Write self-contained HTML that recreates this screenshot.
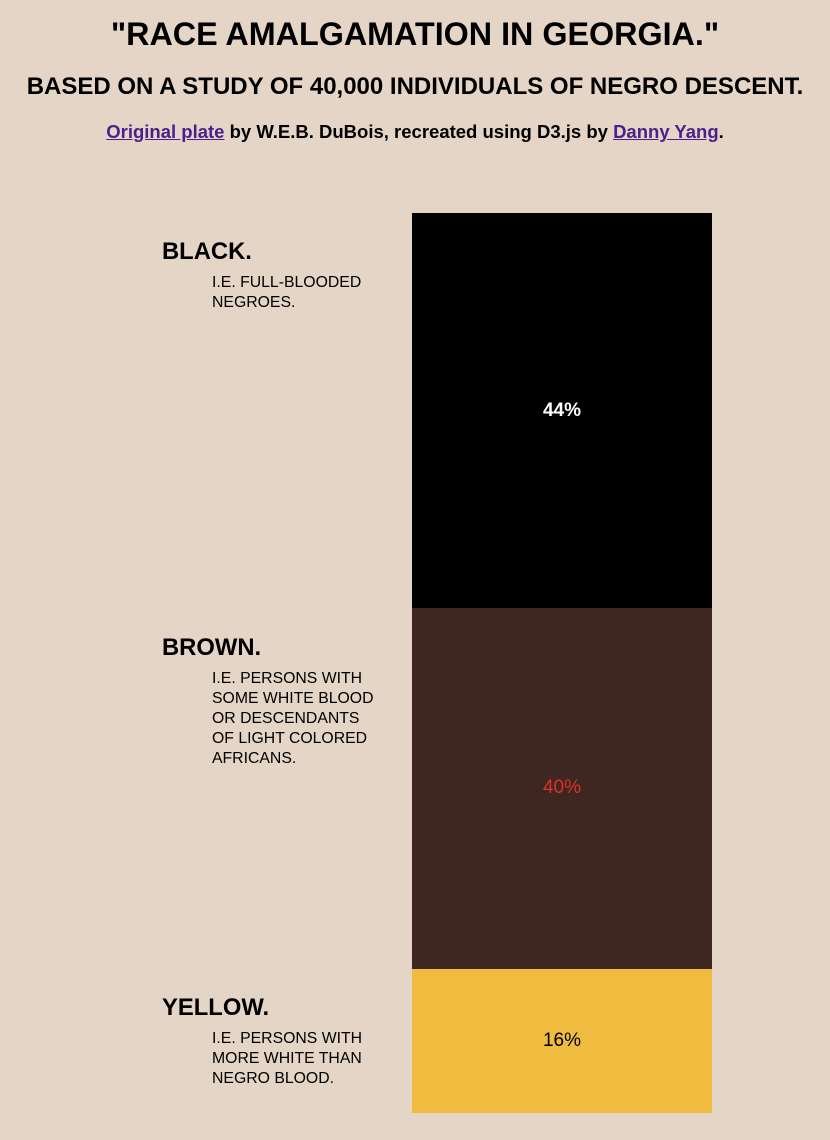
<!DOCTYPE html>
<html><head><meta charset="utf-8"><style>
html,body{margin:0;padding:0;background:#E4D5C6;width:830px;height:1140px;overflow:hidden;font-family:"Liberation Sans",Arial,sans-serif;}
.c{position:absolute;left:0;width:830px;text-align:center;font-weight:bold;color:#000;white-space:nowrap}
a{color:#4B1F8C;text-decoration:underline}
svg{position:absolute;left:0;top:0}
</style></head><body>
<div class="c" style="top:15px;font-size:32.3px;line-height:38px">"RACE AMALGAMATION IN GEORGIA."</div>
<div class="c" style="top:73px;font-size:24px;line-height:28px">BASED ON A STUDY OF 40,000 INDIVIDUALS OF NEGRO DESCENT.</div>
<div class="c" style="top:121px;font-size:18.5px;line-height:22px"><a>Original plate</a> by W.E.B. DuBois, recreated using D3.js by <a>Danny Yang</a>.</div>
<svg width="830" height="1140" font-family="Liberation Sans, Arial, sans-serif">
<rect x="412" y="213" width="300" height="396" fill="#000"/>
<rect x="412" y="608" width="300" height="361" fill="#3D2720"/>
<rect x="412" y="969" width="300" height="144" fill="#F0BC3F"/>
<text x="562" y="416" fill="#fff" font-size="19" font-weight="bold" text-anchor="middle">44%</text>
<text x="562" y="793" fill="#E0302A" font-size="19" text-anchor="middle">40%</text>
<text x="562" y="1046" fill="#000" font-size="19" text-anchor="middle">16%</text>
<g font-weight="bold" font-size="23.8" fill="#000">
<text x="162" y="259">BLACK.</text>
<text x="162" y="655">BROWN.</text>
<text x="162" y="1015">YELLOW.</text>
</g>
<g font-size="15.8" fill="#000">
<text x="212" y="287">I.E. FULL-BLOODED</text>
<text x="212" y="307">NEGROES.</text>
<text x="212" y="683">I.E. PERSONS WITH</text>
<text x="212" y="703">SOME WHITE BLOOD</text>
<text x="212" y="723">OR DESCENDANTS</text>
<text x="212" y="743">OF LIGHT COLORED</text>
<text x="212" y="763">AFRICANS.</text>
<text x="212" y="1043">I.E. PERSONS WITH</text>
<text x="212" y="1063">MORE WHITE THAN</text>
<text x="212" y="1083">NEGRO BLOOD.</text>
</g>
</svg>
</body></html>
